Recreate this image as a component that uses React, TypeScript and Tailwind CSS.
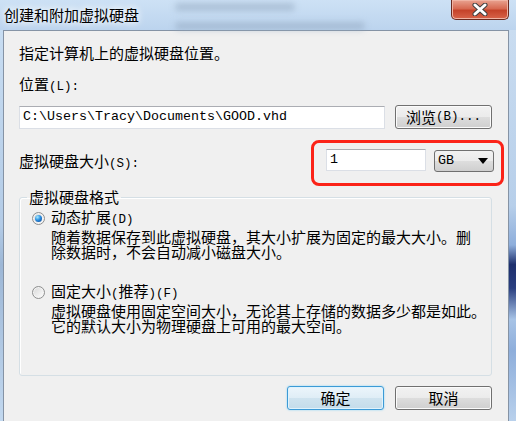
import type { ReactNode } from "react";

const CJK = "font-['Noto_Sans_CJK_SC',sans-serif]";

function Latin({ children }: { children: ReactNode }) {
  return <span className="font-['Liberation_Mono',monospace] text-[12.5px]">{children}</span>;
}

function Radio({ checked }: { checked?: boolean }) {
  return (
    <span className="flex h-[13px] w-[13px] shrink-0 items-center justify-center rounded-full border border-[#8e8f8f] bg-[linear-gradient(135deg,#d6d6d6,#ffffff)] shadow-[inset_0_0_0_1px_#f4f4f4]">
      {checked ? (
        <span className="h-[7px] w-[7px] rounded-full bg-[radial-gradient(circle_at_35%_30%,#a8ecff_0%,#2a8ee0_45%,#0a3f8e_100%)]" />
      ) : null}
    </span>
  );
}

function Button({ children, primary }: { children: ReactNode; primary?: boolean }) {
  const look = primary
    ? "border-[#3c9ad6] bg-[linear-gradient(to_bottom,#ecf5fb_0%,#dfedf6_50%,#cfe3ef_51%,#c4dcea_100%)] shadow-[0_0_2px_#7fd0f7,inset_0_0_0_1px_#dff3fd]"
    : "border-[#707070] bg-[linear-gradient(to_bottom,#f2f2f2_0%,#ebebeb_50%,#dddddd_51%,#cfcfcf_100%)] shadow-[inset_0_0_0_1px_#fbfbfb]";
  return (
    <div className={`flex h-[24px] w-[97px] items-center justify-center rounded-[3px] border leading-[16px] ${look}`}>
      {children}
    </div>
  );
}

function TextBox({ children, className }: { children?: ReactNode; className: string }) {
  return (
    <div
      className={`flex items-center border border-[#dbdfe6] border-t-[#abadb3] bg-white pl-[3px] font-['Liberation_Mono',monospace] text-[13.33px] ${className}`}
    >
      {children}
    </div>
  );
}

function CloseGlyph() {
  return (
    <svg width="18" height="13" viewBox="0 0 18 13">
      <path d="M4 2 L14 11 M14 2 L4 11" stroke="#3f3f3f" strokeWidth="5" strokeLinecap="round" fill="none" />
      <path d="M4 2 L14 11 M14 2 L4 11" stroke="#ffffff" strokeWidth="3" strokeLinecap="round" fill="none" />
    </svg>
  );
}

export default function App() {
  return (
    <div className={`flex h-[421px] w-[516px] flex-col overflow-hidden bg-[#c4daf1] text-[15px] text-black ${CJK}`}>
      {/* title bar */}
      <div className="relative flex h-[30px] shrink-0 items-start bg-[linear-gradient(to_bottom,#cde1f5,#bcd4ee)]">
        <div className="absolute left-[175px] top-[3px] h-[8px] w-[120px] rounded bg-[#8ea3bb] opacity-50 blur-[3px]" />
        <div className="absolute left-[175px] top-[22px] h-[8px] w-[190px] rounded bg-[#8ea3bb] opacity-50 blur-[3px]" />
        <div className="relative ml-[4px] mt-[7px] leading-[16px] [text-shadow:0_0_6px_#ffffff,0_0_10px_#ffffff]">
          创建和附加虚拟硬盘
        </div>
        <div className="relative ml-auto mr-[7px] flex h-[20px] w-[58px] items-center justify-center rounded-b-[5px] border border-t-0 border-[#6b2a1f] bg-[linear-gradient(to_bottom,#e9a391_0%,#d76a52_45%,#c5432a_55%,#d8644a_100%)] shadow-[inset_0_0_0_1px_#f0b4a4]">
          <CloseGlyph />
        </div>
      </div>

      <div className="flex min-h-0 flex-1">
        <div className="w-[3px] bg-[linear-gradient(to_bottom,#c8ddf2_0%,#b3cbe6_50%,#9db7d6_60%,#c2d8ef_100%)]" />

        {/* client area */}
        <div className="flex flex-1 flex-col border border-b-0 border-[#8593a5] bg-[#f0f0f0]">
          <div className="ml-[15px] mt-[14px] leading-[16px]">指定计算机上的虚拟硬盘位置。</div>
          <div className="ml-[15px] mt-[15px] leading-[16px]">
            位置<Latin>(L):</Latin>
          </div>

          <div className="ml-[15px] mt-[10px] flex h-[24px] items-center gap-[10px]">
            <TextBox className="h-[23px] w-[366px]">C:\Users\Tracy\Documents\GOOD.vhd</TextBox>
            <Button>
              浏览<Latin>(B)...</Latin>
            </Button>
          </div>

          <div className="ml-[15px] mr-[4px] mt-[11px] flex items-start">
            <div className="mt-[13px] leading-[16px]">
              虚拟硬盘大小<Latin>(S):</Latin>
            </div>
            <div className="ml-auto flex h-[46px] w-[193px] items-start gap-[8px] rounded-[8px] border-[3px] border-[#fb2318] pl-[12px] pt-[6px]">
              <TextBox className="h-[22px] w-[100px]">1</TextBox>
              <div className="mt-[1px] flex h-[22px] w-[60px] items-center justify-between rounded-[3px] border border-[#707070] bg-[linear-gradient(to_bottom,#f2f2f2_0%,#ebebeb_50%,#dddddd_51%,#cfcfcf_100%)] pl-[3px] pr-[5px]">
                <span className="font-['Liberation_Mono',monospace] text-[13.33px]">GB</span>
                <svg width="10" height="6" viewBox="0 0 10 6">
                  <path d="M0 0 H10 L5 6 Z" fill="#000" />
                </svg>
              </div>
            </div>
          </div>

          <fieldset className="ml-[15px] mr-[16px] mt-[3px] rounded-[3px] border border-[#d5dfe5] pb-[42px] shadow-[inset_1px_1px_0_#ffffff]">
            <legend className="ml-[7px] px-[2px] leading-[16px]">虚拟硬盘格式</legend>
            <div className="ml-[12px] mt-[5px] flex h-[16px] items-center gap-[6px] leading-[16px]">
              <Radio checked />
              <span>
                动态扩展<Latin>(D)</Latin>
              </span>
            </div>
            <div className="ml-[31px] mt-[3px] leading-[15px]">
              随着数据保存到此虚拟硬盘，其大小扩展为固定的最大大小。删
              <br />
              除数据时，不会自动减小磁盘大小。
            </div>
            <div className="ml-[12px] mt-[25px] flex h-[16px] items-center gap-[6px] leading-[16px]">
              <Radio />
              <span>
                固定大小<Latin>(</Latin>推荐<Latin>)(F)</Latin>
              </span>
            </div>
            <div className="ml-[31px] mt-[3px] leading-[15px]">
              虚拟硬盘使用固定空间大小，无论其上存储的数据多少都是如此。
              <br />
              它的默认大小为物理硬盘上可用的最大空间。
            </div>
          </fieldset>

          <div className="mr-[16px] mt-[10px] flex justify-end gap-[11px]">
            <Button primary>确定</Button>
            <Button>取消</Button>
          </div>
        </div>

        <div className="w-[7px] bg-[linear-gradient(to_bottom,#c9dcf0_0%,#b7cfea_45%,#8eaedb_55%,#1d2f6d_60%,#2a3f80_66%,#a7c3e6_74%,#8eaedb_82%,#b9d1ec_100%)]" />
      </div>
    </div>
  );
}
